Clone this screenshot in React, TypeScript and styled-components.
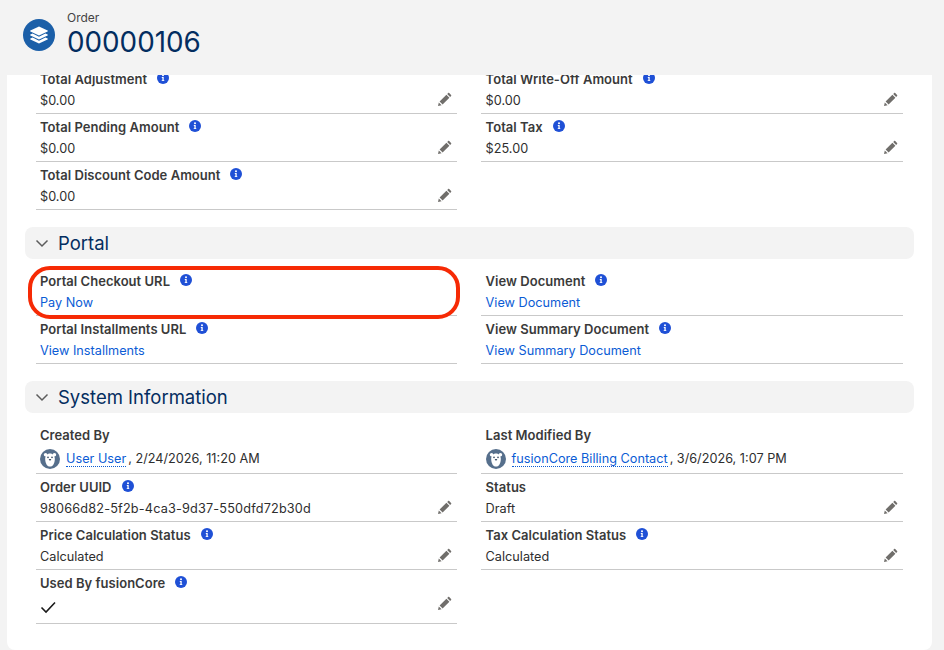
import React from "react";
import styled, { createGlobalStyle } from "styled-components";

const Global = createGlobalStyle`
  html, body { margin: 0; padding: 0; background: #f3f3f3; }
  body { font-family: Inter, "Liberation Sans", sans-serif; color: #2e2e2e; overflow: hidden; }
`;

const Page = styled.div`
  width: 944px;
  height: 650px;
  display: flex;
  flex-direction: column;
  background: #f3f3f3;
  overflow: hidden;
`;

const Header = styled.header`
  height: 75px;
  flex: none;
  display: flex;
  align-items: flex-start;
  padding: 10px 0 0 23px;
  box-sizing: border-box;
`;

const ObjectIcon = styled.div`
  width: 32px;
  height: 32px;
  margin-top: 9px;
  border-radius: 50%;
  background: #1b5fa8;
  display: flex;
  align-items: center;
  justify-content: center;
`;

const HeaderText = styled.div`
  margin-left: 12px;
  display: flex;
  flex-direction: column;
`;

const ObjectName = styled.div`
  font-size: 12px;
  line-height: 15px;
  color: #444;
`;

const RecordName = styled.div`
  font-size: 27.8px;
  line-height: 34px;
  color: #032d60;
`;

const Card = styled.main`
  flex: 1;
  margin: 0 12px 0 7px;
  background: #fff;
  border-radius: 0 0 8px 8px;
  overflow: hidden;
`;

const Scrolled = styled.div`
  margin-top: -9px;
  padding: 0 18px;
`;

const Grid = styled.div`
  display: grid;
  grid-template-columns: 421px 422px;
  column-gap: 24px;
  margin: 0 11px;
`;

const Column = styled.div`
  display: flex;
  flex-direction: column;
`;

const Row = styled.div<{ $h?: number }>`
  position: relative;
  height: ${(p) => p.$h ?? 48}px;
  box-sizing: border-box;
  padding: 5px 4px 0;
  border-bottom: 1px solid #c9c9c9;
`;

const RightColumn = styled(Column)`
  ${Row} {
    padding-left: 4.6px;
  }
`;

const Label = styled.div`
  display: flex;
  align-items: center;
  height: 16px;
  font-size: 13px;
  line-height: 16px;
  font-weight: 600;
  letter-spacing: 0.03px;
  color: #3a3a3a;
`;

const Info = styled.svg`
  width: 12px;
  height: 12px;
  margin: -3px 0 0 10px;
  flex: none;
`;

const Value = styled.div<{ $gap?: number }>`
  margin-top: ${(p) => p.$gap ?? 4}px;
  height: 20px;
  font-size: 12.7px;
  line-height: 20px;
  color: #2e2e2e;
  display: flex;
  align-items: center;
`;

const Uuid = styled.span`
  letter-spacing: 0.17px;
`;

const Link = styled.a`
  color: #0b5cd5;
  text-decoration: none;
`;

const UserLink = styled.a`
  color: #0b5cd5;
  text-decoration: none;
  border-bottom: 1px dotted #0b5cd5;
  line-height: 14px;
  margin: 0 2px 0 6px;
`;

const Pencil = styled.svg`
  position: absolute;
  right: 5px;
  top: 26px;
  width: 15px;
  height: 15px;
`;

const Section = styled.div<{ $gap: number }>`
  height: 32px;
  margin-top: ${(p) => p.$gap}px;
  margin-bottom: 9px;
  background: #f3f3f3;
  border-radius: 8px;
  display: flex;
  align-items: center;
  padding-left: 10px;
  font-size: 18.5px;
  color: #032d60;
`;

const Chevron = styled.svg`
  width: 14px;
  height: 14px;
  margin-right: 9px;
`;

const Highlight = styled.div`
  position: absolute;
  left: -8px;
  right: -3px;
  top: -2px;
  height: 53px;
  box-sizing: border-box;
  border: 4px solid #f62a05;
  border-radius: 22px;
  pointer-events: none;
`;

const Check = styled.svg`
  width: 16px;
  height: 14px;
  margin-top: 3px;
`;

const InfoIcon = () => (
  <Info viewBox="0 0 12 12">
    <circle cx="6" cy="6" r="6" fill="#1f50d6" />
    <circle cx="6" cy="3.2" r="1" fill="#fff" />
    <path d="M4.8 5h1.9v3.2h.6v.9H4.7v-.9h.7V5.9h-.6z" fill="#fff" />
  </Info>
);

const PencilIcon = () => (
  <Pencil viewBox="0 0 15 15">
    <path d="M1 14l.8-3.6 2.8 2.8zM2.6 9.6l6.8-6.8 3 3-6.8 6.8zM10.2 2l1-1c.3-.3.7-.3 1 0l1.9 1.9c.3.3.3.7 0 1l-1 1z" fill="#706e6b" />
  </Pencil>
);

const ChevronIcon = () => (
  <Chevron viewBox="0 0 14 14">
    <path d="M1.5 4.5L7 10l5.5-5.5" fill="none" stroke="#5c5c5c" strokeWidth="1.5" />
  </Chevron>
);

const Avatar = () => (
  <svg width="20" height="20" viewBox="0 0 20 20" style={{ flex: "none" }}>
    <circle cx="10" cy="10" r="10" fill="#566f8c" />
    <circle cx="5.6" cy="5.8" r="1.8" fill="#fff" />
    <circle cx="14.4" cy="5.8" r="1.8" fill="#fff" />
    <path d="M10 4.6c3 0 4.8 2.4 4.8 5.4 0 3.6-1.6 7.6-4.8 7.6S5.2 13.6 5.2 10c0-3 1.8-5.4 4.8-5.4z" fill="#fff" />
    <circle cx="8" cy="8.4" r=".8" fill="#33475f" />
    <circle cx="12" cy="8.4" r=".8" fill="#33475f" />
    <path d="M8.6 10h2.8L10 12z" fill="#33475f" />
  </svg>
);

type F = { label: string; value?: React.ReactNode; info?: boolean; edit?: boolean; h?: number; gap?: number; mark?: boolean };

const Field = ({ label, value, info = true, edit = true, h, gap, mark }: F) => (
  <Row $h={h}>
    <Label>
      {label}
      {info && <InfoIcon />}
    </Label>
    <Value $gap={gap}>{value}</Value>
    {edit && <PencilIcon />}
    {mark && <Highlight />}
  </Row>
);

export default function App() {
  return (
    <Page>
      <Global />
      <Header>
        <ObjectIcon>
          <svg width="22" height="22" viewBox="0 0 22 22">
            <path d="M11 2.5l8.6 4.1c.4.2.4.6 0 .8L11 11.5 2.4 7.4c-.4-.2-.4-.6 0-.8z" fill="#fff" />
            <path d="M4.6 9.6L11 12.7l6.4-3.1 2.2 1c.4.2.4.6 0 .8L11 15.5 2.4 11.4c-.4-.2-.4-.6 0-.8z" fill="#fff" />
            <path d="M4.6 13.6L11 16.7l6.4-3.1 2.2 1c.4.2.4.6 0 .8L11 19.5l-8.6-4.1c-.4-.2-.4-.6 0-.8z" fill="#fff" />
          </svg>
        </ObjectIcon>
        <HeaderText>
          <ObjectName>Order</ObjectName>
          <RecordName>00000106</RecordName>
        </HeaderText>
      </Header>
      <Card>
        <Scrolled>
          <Grid>
            <Column>
              <Field label="Total Adjustment" value="$0.00" />
              <Field label="Total Pending Amount" value="$0.00" />
              <Field label="Total Discount Code Amount" value="$0.00" />
            </Column>
            <RightColumn>
              <Field label="Total Write-Off Amount" value="$0.00" />
              <Field label="Total Tax" value="$25.00" />
            </RightColumn>
          </Grid>
          <Section $gap={17}>
            <ChevronIcon />
            Portal
          </Section>
          <Grid>
            <Column>
              <Field label="Portal Checkout URL" value={<Link>Pay Now</Link>} edit={false} mark />
              <Field label="Portal Installments URL" value={<Link>View Installments</Link>} edit={false} />
            </Column>
            <RightColumn>
              <Field label="View Document" value={<Link>View Document</Link>} edit={false} />
              <Field label="View Summary Document" value={<Link>View Summary Document</Link>} edit={false} />
            </RightColumn>
          </Grid>
          <Section $gap={17}>
            <ChevronIcon />
            System Information
          </Section>
          <Grid>
            <Column>
              <Field
                label="Created By"
                info={false}
                edit={false}
                h={52}
                gap={6}
                value={
                  <>
                    <Avatar />
                    <UserLink>User User</UserLink>, 2/24/2026, 11:20 AM
                  </>
                }
              />
              <Field label="Order UUID" value={<Uuid>98066d82-5f2b-4ca3-9d37-550dfd72b30d</Uuid>} />
              <Field label="Price Calculation Status" value="Calculated" />
              <Field
                label="Used By fusionCore"
                h={54}
                value={
                  <Check viewBox="0 0 16 14">
                    <path d="M1.5 7.5L6 12 15 2.5" fill="none" stroke="#1a1a1a" strokeWidth="1.6" />
                  </Check>
                }
              />
            </Column>
            <RightColumn>
              <Field
                label="Last Modified By"
                info={false}
                edit={false}
                h={52}
                gap={6}
                value={
                  <>
                    <Avatar />
                    <UserLink>fusionCore Billing Contact</UserLink>, 3/6/2026, 1:07 PM
                  </>
                }
              />
              <Field label="Status" info={false} value="Draft" />
              <Field label="Tax Calculation Status" value="Calculated" />
            </RightColumn>
          </Grid>
        </Scrolled>
      </Card>
    </Page>
  );
}
